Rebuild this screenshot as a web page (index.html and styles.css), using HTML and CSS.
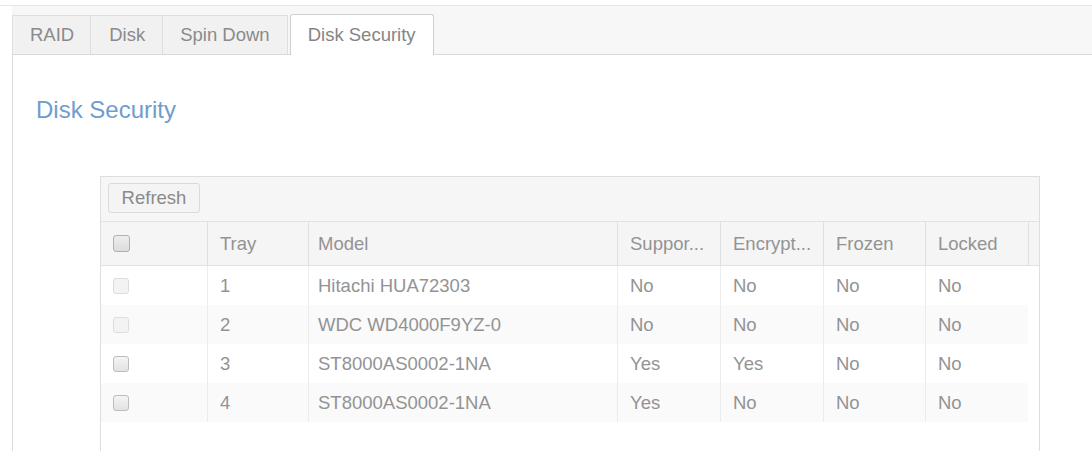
FILE: index.html
```html
<!DOCTYPE html>
<html lang="en">
<head>
<meta charset="utf-8">
<title>Disk Security</title>
<link rel="stylesheet" href="styles.css">
</head>
<body>
<div class="page">
  <div class="topline"></div>
  <div class="tabbar">
    <div class="tab t-raid">RAID</div>
    <div class="tab t-disk">Disk</div>
    <div class="tab t-spin">Spin Down</div>
    <div class="tab active">Disk Security</div>
  </div>
  <div class="panel">
    <h1 class="heading">Disk Security</h1>
    <div class="grid">
      <div class="toolbar">
        <button class="btn">Refresh</button>
      </div>
      <div class="row head">
        <div class="cell c-chk"><span class="chk hdr"></span></div>
        <div class="cell c-tray">Tray</div>
        <div class="cell c-model">Model</div>
        <div class="cell c-sup">Suppor...</div>
        <div class="cell c-enc">Encrypt...</div>
        <div class="cell c-frz">Frozen</div>
        <div class="cell c-lck">Locked</div>
        <div class="cell c-gut"></div>
      </div>
      <div class="body">
        <div class="row">
          <div class="cell c-chk"><span class="chk off"></span></div>
          <div class="cell c-tray">1</div>
          <div class="cell c-model">Hitachi HUA72303</div>
          <div class="cell c-sup">No</div>
          <div class="cell c-enc">No</div>
          <div class="cell c-frz">No</div>
          <div class="cell c-lck">No</div>
        </div>
        <div class="row alt">
          <div class="cell c-chk"><span class="chk off"></span></div>
          <div class="cell c-tray">2</div>
          <div class="cell c-model">WDC WD4000F9YZ-0</div>
          <div class="cell c-sup">No</div>
          <div class="cell c-enc">No</div>
          <div class="cell c-frz">No</div>
          <div class="cell c-lck">No</div>
        </div>
        <div class="row">
          <div class="cell c-chk"><span class="chk"></span></div>
          <div class="cell c-tray">3</div>
          <div class="cell c-model">ST8000AS0002-1NA</div>
          <div class="cell c-sup">Yes</div>
          <div class="cell c-enc">Yes</div>
          <div class="cell c-frz">No</div>
          <div class="cell c-lck">No</div>
        </div>
        <div class="row alt">
          <div class="cell c-chk"><span class="chk"></span></div>
          <div class="cell c-tray">4</div>
          <div class="cell c-model">ST8000AS0002-1NA</div>
          <div class="cell c-sup">Yes</div>
          <div class="cell c-enc">No</div>
          <div class="cell c-frz">No</div>
          <div class="cell c-lck">No</div>
        </div>
      </div>
    </div>
  </div>
</div>
</body>
</html>
```
FILE: styles.css
```css
html, body {
  margin: 0;
  padding: 0;
  height: 451px;
  overflow: hidden;
  background: #fff;
}
.page {
  font-family: "Liberation Sans", Arial, sans-serif;
  font-size: 18.5px;
  color: #939393;
}
.topline {
  height: 5px;
  border-bottom: 1px solid #e8e8e8;
}
.tabbar {
  margin-left: 12px;
  background: #f7f7f7;
  padding-top: 8px;
  border-bottom: 1px solid #d9d9d9;
  display: flex;
  align-items: flex-end;
  height: 40px;
}
.tab {
  box-sizing: border-box;
  height: 39px;
  padding: 0 17px;
  display: flex;
  align-items: center;
  background: #f1f1f1;
  border: 1px solid #dedede;
  border-bottom: none;
  border-right: none;
  color: #8a8a8a;
}
.t-raid {
  padding: 0 16px 0 17px;
}
.t-disk {
  padding: 0 17px 0 18px;
}
.t-spin {
  border-right: 1px solid #dedede;
  margin-right: 2px;
  padding: 0 17px;
}
.tab.active {
  height: 41px;
  margin-bottom: -1px;
  background: #fff;
  border: 1px solid #cfcfcf;
  border-bottom: none;
  border-radius: 3px 3px 0 0;
  padding: 0 17px;
  color: #858585;
}
.panel {
  margin-left: 12px;
  border-left: 1px solid #dcdcdc;
  padding-left: 23px;
  padding-top: 41px;
  height: 500px;
}
.heading {
  margin: 0;
  font-size: 24px;
  line-height: 28px;
  font-weight: normal;
  color: #6f9dcc;
}
.grid {
  margin-top: 52px;
  margin-left: 64px;
  width: 940px;
  box-sizing: border-box;
  border: 1px solid #dedede;
  height: 400px;
}
.toolbar {
  background: #f6f6f6;
  border-bottom: 1px solid #e2e2e2;
  height: 45px;
  padding: 6px 0 0 7px;
  box-sizing: border-box;
}
.btn {
  box-sizing: border-box;
  width: 92px;
  height: 30px;
  border: 1px solid #dadada;
  border-radius: 3px;
  background: #f4f4f4;
  font-family: "Liberation Sans", Arial, sans-serif;
  font-size: 18.5px;
  color: #8a8a8a;
  padding: 0;
}
.row {
  display: flex;
  height: 39px;
}
.row.head {
  height: 44px;
  background: #f5f5f5;
  border-bottom: 1px solid #e2e2e2;
  box-sizing: border-box;
}
.body {
  width: 927px;
}
.row.alt {
  background: #fafafa;
}
.cell {
  box-sizing: border-box;
  display: flex;
  align-items: center;
  padding-left: 12px;
  border-right: 1px solid #ececec;
  white-space: nowrap;
  overflow: hidden;
}
.head .cell {
  border-right-color: #e0e0e0;
}
.c-chk { width: 107px; padding-left: 12px; }
.c-tray { width: 101px; }
.c-model { width: 309px; padding-left: 9px; }
.c-sup { width: 103px; }
.c-enc { width: 103px; }
.c-frz { width: 102px; }
.c-lck { width: 103px; }
.body .c-lck { width: 102px; border-right: none; }
.c-gut { width: 10px; border-right: none; padding: 0; }
.chk {
  box-sizing: border-box;
  width: 16px;
  height: 16px;
  border: 1px solid #bdbdbd;
  border-radius: 3px;
  background: linear-gradient(#f4f4f4, #e2e2e2);
}
.chk.hdr {
  width: 17px;
  height: 17px;
  border-color: #b0b0b0;
  background: linear-gradient(#eeeeee, #dcdcdc);
}
.chk.off {
  border-color: #dddddd;
  background: #f3f3f3;
}
```
